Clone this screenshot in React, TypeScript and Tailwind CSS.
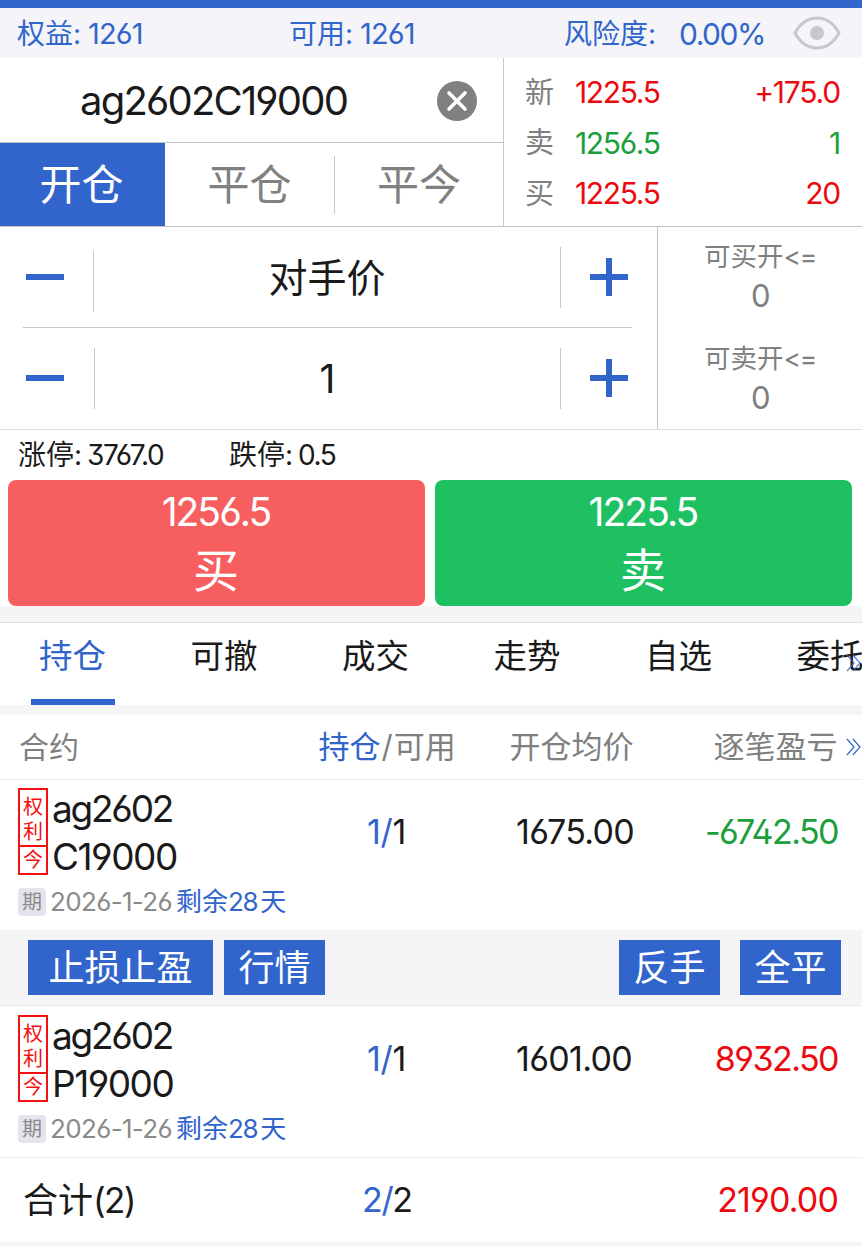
import type { ReactNode } from 'react';
import clsx from 'clsx';
import { twMerge } from 'tailwind-merge';

interface Position {
  product: string;
  strike: string;
  held: number;
  available: number;
  avgPrice: string;
  profit: string;
  expiry: string;
  daysLeft: number;
}

const quotes = [
  { label: '新', price: '1225.5', extra: '+175.0', color: 'text-[#eb0a0f]' },
  { label: '卖', price: '1256.5', extra: '1', color: 'text-[#1c9f3c]' },
  { label: '买', price: '1225.5', extra: '20', color: 'text-[#eb0a0f]' },
];

const tabs = ['持仓', '可撤', '成交', '走势', '自选', '委托'];

const positions: Position[] = [
  { product: 'ag2602', strike: 'C19000', held: 1, available: 1, avgPrice: '1675.00', profit: '-6742.50', expiry: '2026-1-26', daysLeft: 28 },
  { product: 'ag2602', strike: 'P19000', held: 1, available: 1, avgPrice: '1601.00', profit: '8932.50', expiry: '2026-1-26', daysLeft: 28 },
];

function Num({ children, className }: { children: ReactNode; className?: string }) {
  return <span className={twMerge('tracking-tighter', className)}>{children}</span>;
}

function DoubleChevron({ className }: { className?: string }) {
  return (
    <svg viewBox="0 0 16 18" className={clsx('h-[18px] w-4', className)} fill="none" stroke="#3165cc" strokeWidth="1.2">
      <path d="M1 1l7 8-7 8M7 1l7 8-7 8" />
    </svg>
  );
}

function AccountBar() {
  return (
    <div className="flex h-[50px] items-center bg-[#f5f5f9] pt-px text-[28px] text-[#3165cc]">
      <div className="w-[289px] pl-[17px]">权益: <Num className="-ml-px text-[29px] tracking-[-0.03em]">1261</Num></div>
      <div className="w-[275px]">可用: <Num className="-ml-px text-[29px] tracking-[-0.03em]">1261</Num></div>
      <div className="w-[115px]">风险度:</div>
      <Num className="w-[114px] text-[30px]">0.00%</Num>
      <svg viewBox="0 0 48 34" className="mb-[2px] h-[34px] w-12" fill="none" stroke="#c8c6d0" strokeWidth="3">
        <path d="M2 17C13-3 35-3 46 17C35 37 13 37 2 17Z" strokeLinejoin="round" />
        <circle cx="24" cy="17" r="7" fill="#c8c6d0" stroke="none" />
      </svg>
    </div>
  );
}

function ContractPanel() {
  return (
    <div className="flex h-[169px] border-b border-[#c2c2c2]">
      <div className="w-[504px] border-r border-[#c8c8c8]">
        <div className="flex h-[85px] items-center border-b border-[#c2c2c2] pt-px pl-[80px]">
          <Num className="w-[357px] text-[40px] tracking-[-0.045em]">ag2602C19000</Num>
          <svg viewBox="0 0 40 40" className="h-10 w-10">
            <circle cx="20" cy="20" r="20" fill="#808080" />
            <path d="M12 12l16 16M28 12L12 28" stroke="#fff" strokeWidth="3.6" strokeLinecap="round" />
          </svg>
        </div>
        <div className="flex h-[83px] items-center text-[42px] text-[#808080]">
          <button className="h-full w-[165px] bg-[#3165cc] pr-[2px] text-white">开仓</button>
          <button className="h-[58px] w-[170px] border-r border-[#c8c8c8]">平仓</button>
          <button className="h-full w-[168px]">平今</button>
        </div>
      </div>
      <div className="flex flex-1 flex-col pt-[9px] pr-[22px] pl-[21px]">
        {quotes.map((q) => (
          <div key={q.label} className="flex h-[50.5px] items-center">
            <span className="w-[50px] text-[29px] text-[#808080]">{q.label}</span>
            <Num className={clsx('text-[30px] tracking-[-0.045em]', q.color)}>{q.price}</Num>
            <Num className={clsx('ml-auto text-[30px] tracking-[-0.04em]', q.color)}>{q.extra}</Num>
          </div>
        ))}
      </div>
    </div>
  );
}

function Stepper({ children, dividerClassName }: { children: ReactNode; dividerClassName?: string }) {
  return (
    <div className="flex h-[100px] items-center pl-[26px]">
      <div className="h-[6px] w-[38px] bg-[#3165cc]" />
      <div className={clsx('h-[61px] w-px bg-[#c8c8c8]', dividerClassName)} />
      <div className="flex-1 text-center text-[39px]">{children}</div>
      <div className="flex h-[61px] w-[97px] items-center border-l border-[#c8c8c8] pl-[29px]">
        <svg viewBox="0 0 38 38" className="h-[38px] w-[38px]" stroke="#3165cc" strokeWidth="6">
          <path d="M0 19h38M19 0v38" />
        </svg>
      </div>
    </div>
  );
}

function Openable({ label }: { label: string }) {
  return (
    <div className="flex h-[102px] flex-col items-center pt-4 text-[#808080]">
      <div className="text-[26.5px]">{label}<Num>&lt;=</Num></div>
      <Num className="mt-[10px] text-[31px]">0</Num>
    </div>
  );
}

function OrderForm() {
  return (
    <div className="flex h-[203px] border-b border-[#dcdcdc]">
      <div className="w-[658px] border-r border-[#c2c2c2]">
        <Stepper dividerClassName="mt-2 ml-[29px]">对手价</Stepper>
        <div className="mr-[25px] ml-[23px] h-px bg-[#c8c8c8]" />
        <Stepper dividerClassName="ml-[30px]">1</Stepper>
      </div>
      <div className="flex-1">
        <Openable label="可买开" />
        <Openable label="可卖开" />
      </div>
    </div>
  );
}

function TradeButton({ price, label, className }: { price: string; label: string; className: string }) {
  return (
    <button className={clsx('flex h-[126px] flex-1 flex-col items-center rounded-lg pt-3 text-white', className)}>
      <Num className="text-[39px]">{price}</Num>
      <span className="mt-4 text-[46px]">{label}</span>
    </button>
  );
}

function TabBar() {
  return (
    <div className="relative flex h-[82px] overflow-hidden text-[33.5px]">
      {tabs.map((tab, i) => (
        <button
          key={tab}
          className={clsx('relative h-full w-[151.5px] shrink-0 pb-[15px] pl-[39px] text-left', i === 0 && 'text-[#3165cc]')}
        >
          {tab}
          {i === 0 && <span className="absolute bottom-0 left-[31px] h-[6px] w-[84px] bg-[#3165cc]" />}
        </button>
      ))}
      <DoubleChevron className="absolute top-[31px] right-0 opacity-80" />
    </div>
  );
}

function PositionRow({ position: p }: { position: Position }) {
  return (
    <div className="h-[150px] pt-2">
      <div className="flex h-[88px]">
        <div className="ml-[18px] flex h-[87px] w-[30px] flex-col border-2 border-[#f50f0f] text-center text-[20px] text-[#f50f0f]">
          <div className="flex flex-1 flex-col justify-center gap-[5px] border-b-2 border-[#f50f0f] pt-[3px]">
            <span>权</span>
            <span>利</span>
          </div>
          <div className="flex h-[26px] items-center justify-center">今</div>
        </div>
        <div className="flex w-[319px] flex-col pl-1 text-[37px]">
          <Num className="mt-[2px] tracking-[-0.06em]">{p.product}</Num>
          <Num className="mt-[11px] tracking-[-0.04em]">{p.strike}</Num>
        </div>
        <div className="flex flex-1 items-center text-[34px]">
          <Num className="w-[149px] tracking-[-0.01em]"><span className="text-[#3165cc]">{p.held}/</span>{p.available}</Num>
          <Num className="tracking-[-0.02em]">{p.avgPrice}</Num>
          <Num className={clsx('mr-6 ml-auto tracking-[-0.045em]', p.profit.startsWith('-') ? 'text-[#1c9f3c]' : 'text-[#eb0a0f]')}>
            {p.profit}
          </Num>
        </div>
      </div>
      <div className="mt-[12px] flex h-7 items-center pl-[18px] text-[26px] text-[#8a8a8a]">
        <span className="flex h-7 w-7 items-center justify-center rounded bg-[#e4e4ec] text-[20px]">期</span>
        <Num className="ml-1 w-[126px] tracking-tight">{p.expiry}</Num>
        <span className="text-[#3165cc]">剩余<Num className="mr-[3px]">{p.daysLeft}</Num>天</span>
      </div>
    </div>
  );
}

function ActionButton({ children, className }: { children: ReactNode; className: string }) {
  return <button className={clsx('h-[55px] bg-[#3165cc] pt-px text-[36px] text-white', className)}>{children}</button>;
}

export default function App() {
  return (
    <div className="h-[1246px] w-[862px] overflow-hidden bg-white font-['Inter','Noto_Sans_CJK_SC',sans-serif] leading-none whitespace-nowrap text-[#1a1a1a] [font-feature-settings:'ss01']">
      <div className="h-2 bg-[#3165cc]" />
      <AccountBar />
      <ContractPanel />
      <OrderForm />

      <div className="flex h-[50px] items-center pl-[18px] text-[28px]">
        <div className="w-[211px]">涨停: <Num className="-ml-[3px] tracking-[-0.045em]">3767.0</Num></div>
        <div>跌停: <Num className="-ml-[3px]">0.5</Num></div>
      </div>

      <div className="flex gap-[10px] pr-[10.5px] pl-[7.5px]">
        <TradeButton price="1256.5" label="买" className="bg-[#f75e5f]" />
        <TradeButton price="1225.5" label="卖" className="bg-[#1fc062]" />
      </div>
      <div className="h-[17px] border-b border-[#dcdde0] bg-[#f5f5f8]" />

      <TabBar />
      <div className="h-[10px] bg-[#f5f5f5]" />

      <div className="relative flex h-[65px] items-center border-b border-[#ececee] pb-px text-[31px] text-[#808080]">
        <span className="w-[318.5px] pl-[19px] text-[30px]">合约</span>
        <span className="w-[191px]"><span className="text-[#3165cc]">持仓</span><span className="mx-px">/</span>可用</span>
        <span className="w-[204px]">开仓均价</span>
        <span>逐笔盈亏</span>
        <DoubleChevron className="absolute right-0" />
      </div>

      <PositionRow position={positions[0]} />
      <div className="flex h-[76px] border-b border-[#e6e6e8] bg-[#f5f5f8] pt-[10px] pl-7">
        <ActionButton className="w-[185px]">止损止盈</ActionButton>
        <ActionButton className="ml-[11px] w-[101px]">行情</ActionButton>
        <ActionButton className="mr-5 ml-auto w-[101px]">反手</ActionButton>
        <ActionButton className="mr-[21px] w-[101px]">全平</ActionButton>
      </div>
      <div className="pt-px">
        <PositionRow position={positions[1]} />
      </div>

      <div className="flex h-[85px] items-center border-t border-[#ececee] text-[34px]">
        <span className="w-[362px] pl-[23px] text-[35px]">合计<Num>(2)</Num></span>
        <Num className="tracking-[-0.04em]"><span className="text-[#3165cc]">2/</span>2</Num>
        <Num className="mr-6 ml-auto tracking-tight text-[#eb0a0f]">2190.00</Num>
      </div>
      <div className="h-2 bg-[#f5f5f8]" />
    </div>
  );
}
